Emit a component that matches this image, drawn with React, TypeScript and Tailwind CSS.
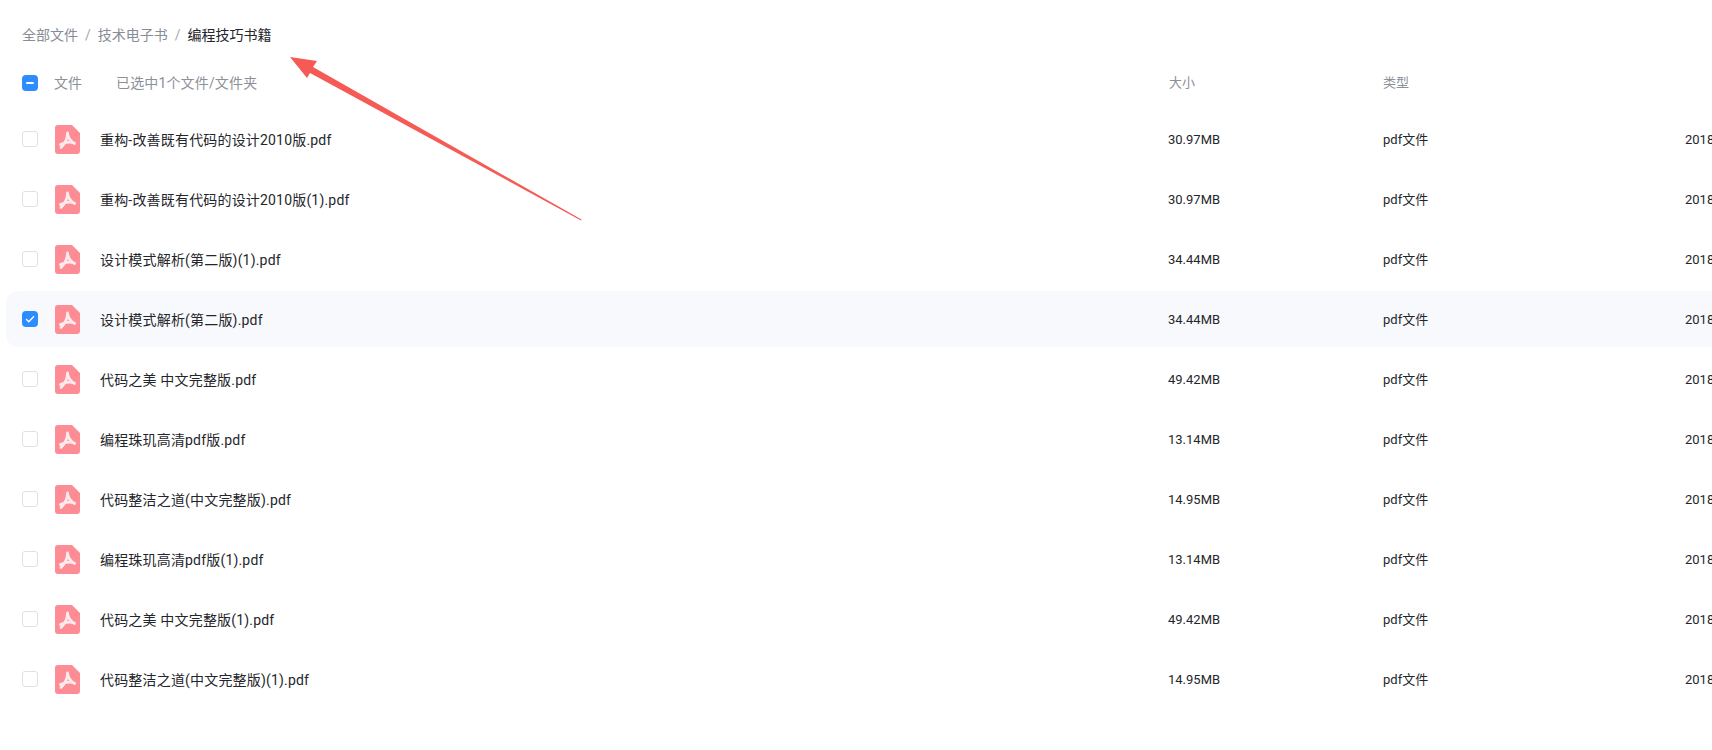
const files = [
  { name: '重构-改善既有代码的设计2010版.pdf', size: '30.97MB' },
  { name: '重构-改善既有代码的设计2010版(1).pdf', size: '30.97MB' },
  { name: '设计模式解析(第二版)(1).pdf', size: '34.44MB' },
  { name: '设计模式解析(第二版).pdf', size: '34.44MB', checked: true },
  { name: '代码之美 中文完整版.pdf', size: '49.42MB' },
  { name: '编程珠玑高清pdf版.pdf', size: '13.14MB' },
  { name: '代码整洁之道(中文完整版).pdf', size: '14.95MB' },
  { name: '编程珠玑高清pdf版(1).pdf', size: '13.14MB' },
  { name: '代码之美 中文完整版(1).pdf', size: '49.42MB' },
  { name: '代码整洁之道(中文完整版)(1).pdf', size: '14.95MB' },
]

function PdfIcon() {
  return (
    <svg width="25" height="29" viewBox="0 0 25 29" className="shrink-0">
      <path d="M3 0H17L25 8V26a3 3 0 0 1-3 3H3a3 3 0 0 1-3-3V3a3 3 0 0 1 3-3Z" fill="#fd8c94" />
      <path
        d="M12.500 8C12.500 12.500 10 18.500 6 22.500M12.500 8c.5 4.500 3 8.500 7 10.500M5.500 19.500C9 17.500 15 16.500 19.500 18"
        fill="none"
        stroke="#fdeaec"
        strokeWidth="2.800"
        strokeLinecap="round"
        strokeLinejoin="round"
      />
    </svg>
  )
}

function Checkbox({ state }: { state?: 'checked' | 'partial' }) {
  if (!state) return <div className="w-4 h-4 shrink-0 rounded-[3px] border border-[#dfe1e6] bg-white" />
  return (
    <div className="w-4 h-4 shrink-0 rounded-[4px] bg-[#2d8cff] flex items-center justify-center">
      {state === 'partial' ? (
        <div className="w-2 h-[2px] rounded-sm bg-white" />
      ) : (
        <svg width="10" height="8" viewBox="0 0 10 8">
          <path d="M1 4l2.800 2.800L9 1.200" fill="none" stroke="#fff" strokeWidth="1.300" />
        </svg>
      )}
    </div>
  )
}

export default function App() {
  return (
    <div className="relative h-[750px] w-[1712px] overflow-hidden bg-white font-['Roboto','Noto_Sans_CJK_SC',sans-serif] text-[#25262b]">
      <div className="flex items-center h-[20px] mt-[25px] pl-[22px] text-[14px] text-[#878c96] whitespace-nowrap">
        <span>全部文件</span>
        <span className="mx-[7px] text-[#a5a9b0]">/</span>
        <span>技术电子书</span>
        <span className="mx-[7px] text-[#a5a9b0]">/</span>
        <span className="text-[#25262b]">编程技巧书籍</span>
      </div>

      <div className="flex items-center h-[20px] mt-[28px] pl-[22px] text-[#8c9099] whitespace-nowrap">
        <Checkbox state="partial" />
        <span className="ml-[16px] w-[62px] text-[14px]">文件</span>
        <span className="w-[1053px] text-[14px] tracking-[0.15px]">已选中1个文件/文件夹</span>
        <span className="w-[214px] text-[13px]">大小</span>
        <span className="text-[13px]">类型</span>
      </div>

      <div className="mt-[16px] ml-[6px] flex flex-col">
        {files.map(f => (
          <div key={f.name} className="h-[60px] py-[2px]">
            <div className={`flex items-center h-[56px] pl-[16px] rounded-l-xl whitespace-nowrap ${f.checked ? 'bg-[#f7f9fc]' : ''}`}>
              <Checkbox state={f.checked ? 'checked' : undefined} />
              <div className="ml-[17px]"><PdfIcon /></div>
              <span className="ml-[20px] w-[1068px] shrink-0 pt-[2px] text-[14px] tracking-[0.18px]">{f.name}</span>
              <span className="w-[215px] shrink-0 pt-[2px] text-[13px]">{f.size}</span>
              <span className="w-[302px] shrink-0 pt-[2px] text-[13px]">pdf文件</span>
              <span className="shrink-0 pt-[2px] text-[13px]">2018-10-26 10:21</span>
            </div>
          </div>
        ))}
      </div>

      {/* annotation arrow */}
      <svg className="absolute left-0 top-0 pointer-events-none" width="1712" height="750">
        <polygon points="290,57 317,61 313,67 581.500,219.500 581,220.500 310,73 307,78" fill="#f55a55" />
      </svg>
    </div>
  )
}
